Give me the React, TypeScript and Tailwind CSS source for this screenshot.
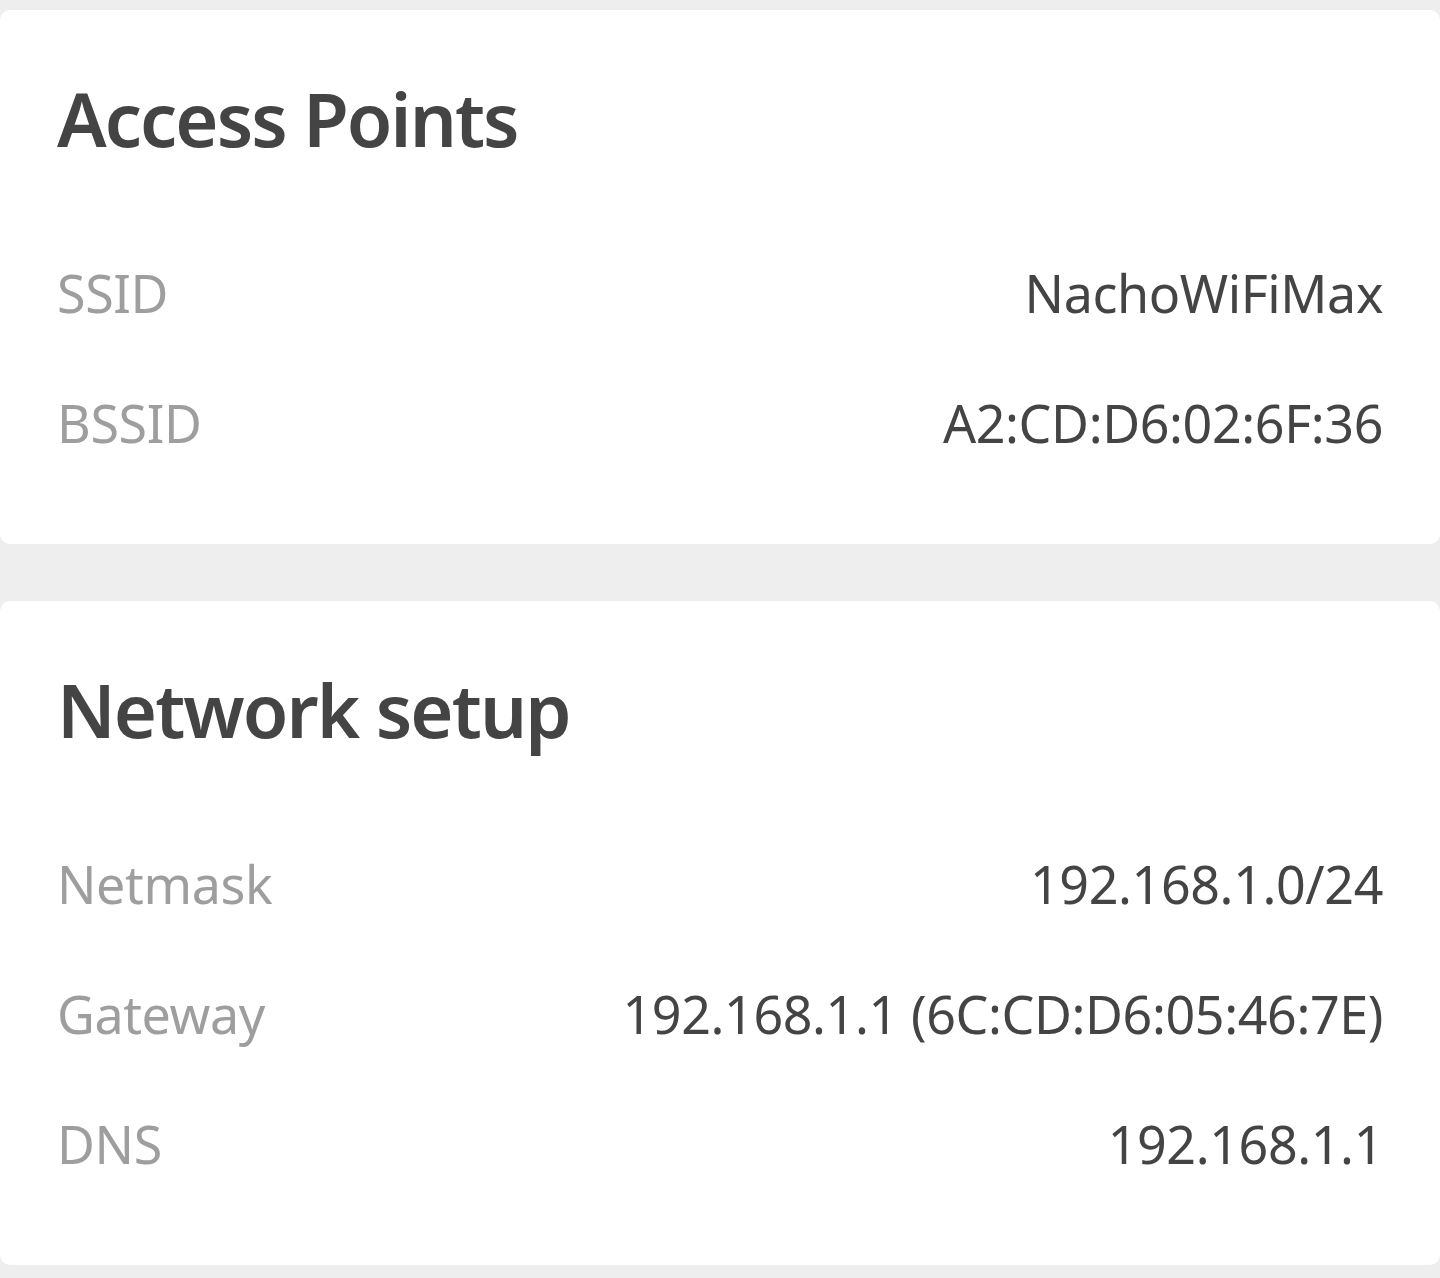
import React from "react";

const font = { fontFamily: '"Noto Sans", "Open Sans", sans-serif' };

function Row({ label, value }: { label: string; value: string }) {
  return (
    <div className="flex h-[130px] items-center justify-between leading-[130px] text-[52px] tracking-[-0.4px]">
      <span className="text-[#9e9e9e]">{label}</span>
      <span className="text-[#444444]">{value}</span>
    </div>
  );
}

function Card({ title, rows }: { title: string; rows: [string, string][] }) {
  return (
    <div className="rounded-[10px] bg-white px-[57px] pt-[71px] pb-[56px]">
      <h2 className="text-[74px] leading-[76px] font-semibold tracking-[-1.9px] text-[#444444]">{title}</h2>
      <div className="mt-[71px]">
        {rows.map(([l, v]) => (
          <Row key={l} label={l} value={v} />
        ))}
      </div>
    </div>
  );
}

export default function App() {
  return (
    <div className="min-h-[1278px] bg-[#eeeeee] pt-[10px]" style={font}>
      <div className="flex flex-col gap-[57px]">
        <Card
          title="Access Points"
          rows={[
            ["SSID", "NachoWiFiMax"],
            ["BSSID", "A2:CD:D6:02:6F:36"],
          ]}
        />
        <Card
          title="Network setup"
          rows={[
            ["Netmask", "192.168.1.0/24"],
            ["Gateway", "192.168.1.1 (6C:CD:D6:05:46:7E)"],
            ["DNS", "192.168.1.1"],
          ]}
        />
      </div>
    </div>
  );
}
